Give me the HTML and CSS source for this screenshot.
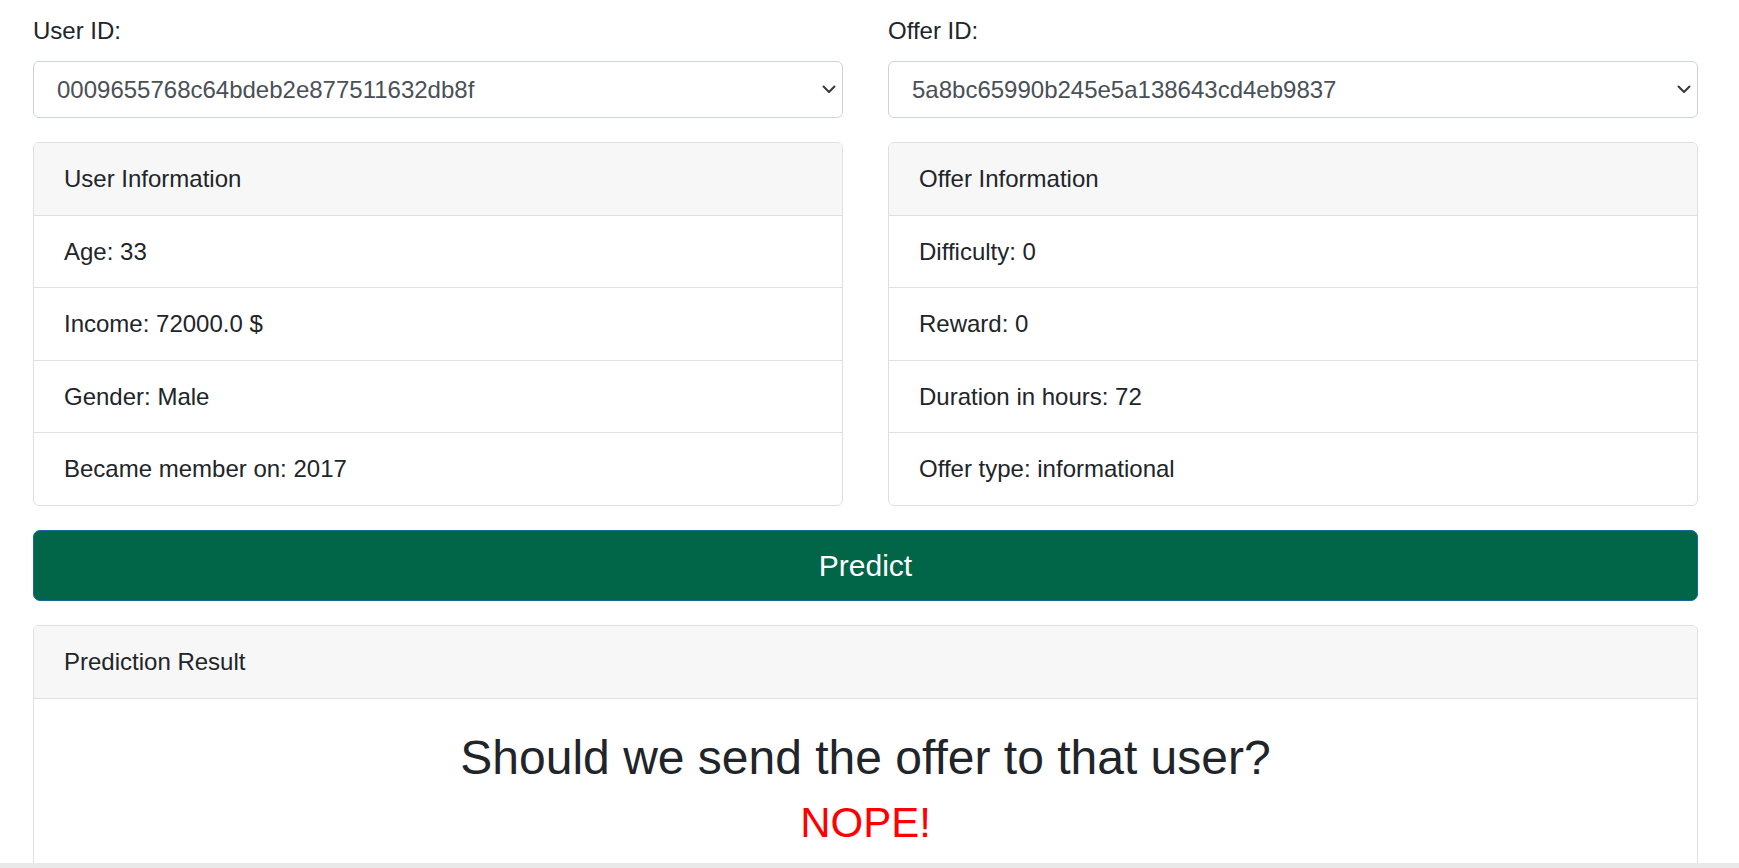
FILE: index.html
```html
<!DOCTYPE html>
<html lang="en">
<head>
<meta charset="utf-8">
<title>Offer Prediction</title>
<link rel="stylesheet" href="styles.css">
</head>
<body>
<div class="page">
  <div class="row">
    <div class="col">
      <div class="form-group">
        <label class="label">User ID:</label>
        <div class="select">
          <span class="select-text">0009655768c64bdeb2e877511632db8f</span>
          <svg class="chev" width="14" height="9" viewBox="0 0 14 9"><path d="M1.5 1.5 L7 7 L12.5 1.5" fill="none" stroke="#343a40" stroke-width="2" stroke-linecap="round" stroke-linejoin="round"/></svg>
        </div>
      </div>
      <div class="card">
        <div class="card-header">User Information</div>
        <ul class="list">
          <li class="item">Age: 33</li>
          <li class="item">Income: 72000.0 $</li>
          <li class="item">Gender: Male</li>
          <li class="item">Became member on: 2017</li>
        </ul>
      </div>
    </div>
    <div class="col">
      <div class="form-group">
        <label class="label">Offer ID:</label>
        <div class="select">
          <span class="select-text">5a8bc65990b245e5a138643cd4eb9837</span>
          <svg class="chev" width="14" height="9" viewBox="0 0 14 9"><path d="M1.5 1.5 L7 7 L12.5 1.5" fill="none" stroke="#343a40" stroke-width="2" stroke-linecap="round" stroke-linejoin="round"/></svg>
        </div>
      </div>
      <div class="card">
        <div class="card-header">Offer Information</div>
        <ul class="list">
          <li class="item">Difficulty: 0</li>
          <li class="item">Reward: 0</li>
          <li class="item">Duration in hours: 72</li>
          <li class="item">Offer type: informational</li>
        </ul>
      </div>
    </div>
  </div>
  <button class="btn-predict" type="button">Predict</button>
  <div class="card result-card">
    <div class="card-header">Prediction Result</div>
    <div class="card-body">
      <h2 class="question">Should we send the offer to that user?</h2>
      <h3 class="answer">NOPE!</h3>
    </div>
  </div>
</div>
<div class="bottom-bar"></div>
</body>
</html>
```

FILE: styles.css
```css
* { box-sizing: border-box; }
html, body { margin: 0; padding: 0; background: #fff; }
body {
  font-family: "Liberation Sans", Arial, sans-serif;
  font-size: 24px;
  line-height: 1.5;
  color: #212529;
}
.page {
  width: 1665px;
  margin-left: 33px;
  padding-top: 13px;
}
.row {
  display: flex;
  gap: 45px;
}
.col {
  flex: 1 1 0;
  min-width: 0;
}
.form-group {
  margin-bottom: 24px;
}
.label {
  display: block;
  margin-bottom: 12px;
  line-height: 36px;
}
.select {
  display: flex;
  align-items: center;
  justify-content: space-between;
  height: 57px;
  padding: 0 6px 0 23px;
  border: 1px solid #ced4da;
  border-radius: 6px;
  color: #495057;
  background: #fff;
}
.select-text { line-height: 36px; }
.chev { display: block; }
.card {
  border: 1px solid #dfdfdf;
  border-radius: 6px;
  background: #fff;
  overflow: hidden;
}
.card-header {
  background: #f7f7f7;
  border-bottom: 1px solid #dfdfdf;
  padding: 18px 30px;
  line-height: 36px;
}
.list {
  list-style: none;
  margin: 0;
  padding: 0;
}
.item {
  padding: 18px 30px;
  line-height: 35.4px;
  border-bottom: 1px solid #dfdfdf;
}
.item:last-child { border-bottom: 0; }
.btn-predict {
  display: block;
  width: 100%;
  margin-top: 24px;
  height: 71px;
  background: #006647;
  border: 1px solid #17699b;
  border-radius: 7px;
  color: #fff;
  font-family: "Liberation Sans", Arial, sans-serif;
  font-size: 30px;
  line-height: 45px;
  padding: 12px 24px;
}
.result-card { margin-top: 24px; }
.card-body {
  padding: 30px;
  text-align: center;
}
.question {
  margin: 0 0 12px;
  font-size: 48px;
  font-weight: 400;
  line-height: 1.2;
}
.answer {
  margin: 0 0 12px;
  font-size: 42px;
  font-weight: 400;
  line-height: 1.2;
  color: #ff0000;
}
.bottom-bar {
  position: fixed;
  left: 0;
  right: 0;
  bottom: 0;
  height: 5px;
  background: #e9e9e9;
}
```
